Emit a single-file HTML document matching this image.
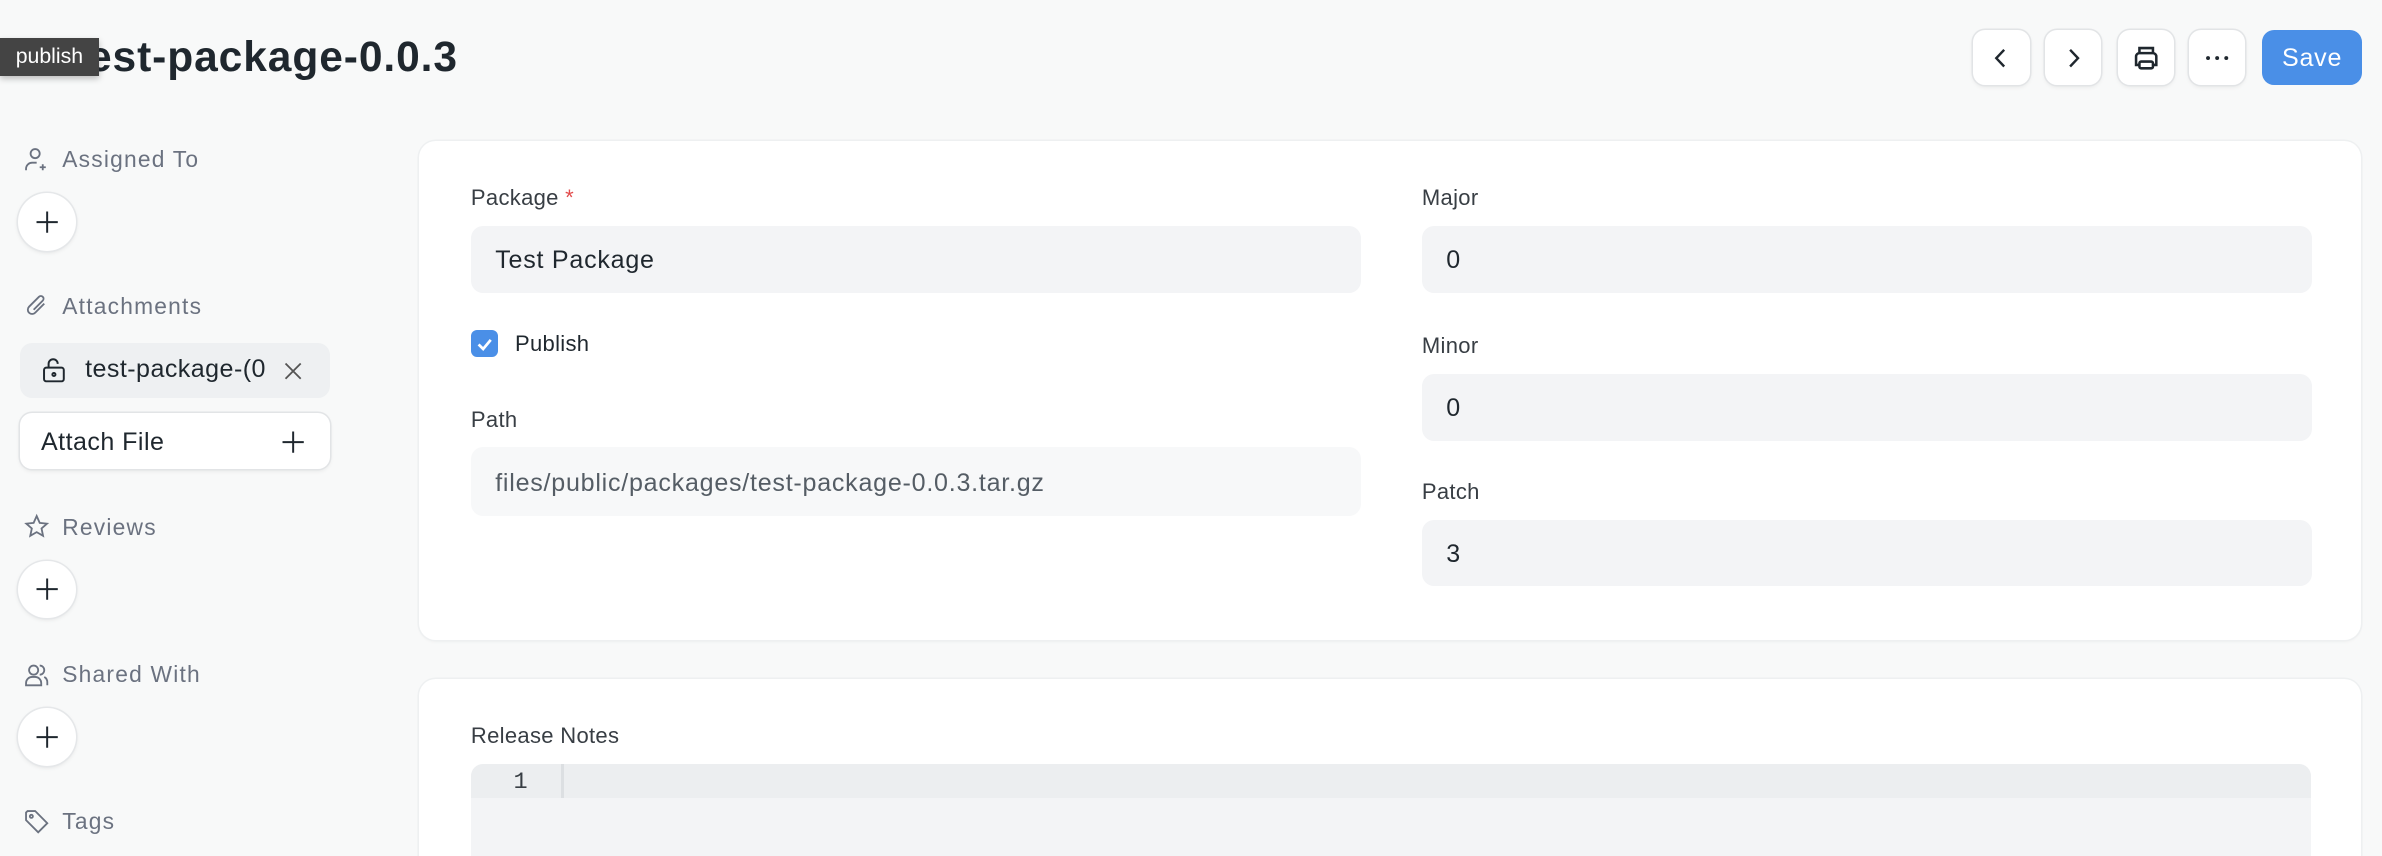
<!DOCTYPE html>
<html><head><meta charset="utf-8"><style>
html,body{margin:0;padding:0;width:2382px;height:856px;overflow:hidden;background:#f8f9f9}
#w{zoom:1.51913;position:relative;width:1568px;height:564px;font-family:"Liberation Sans",sans-serif;color:#1f272e}
.a{position:absolute}
.btn{position:absolute;top:20px;width:37px;height:36px;background:#fff;border-radius:8px;box-shadow:0 0 0 1px #e2e4e6,0 1px 3px rgba(0,0,0,.08);display:flex;align-items:center;justify-content:center}
.lbl{position:absolute;font-size:15px;color:#6b7280;letter-spacing:.8px;display:flex;align-items:center;gap:8px}
.circ{position:absolute;left:12px;width:38px;height:38px;border-radius:50%;background:#fff;box-shadow:0 0 0 1px #e5e7e9,0 1px 3px rgba(0,0,0,.1);display:flex;align-items:center;justify-content:center}
.card{position:absolute;left:276px;width:1278px;background:#fff;border-radius:11px;box-shadow:0 0 0 1px #eef0f1,0 1px 2px rgba(0,0,0,.04)}
.fl{position:absolute;font-size:14.5px;color:#383e44;letter-spacing:.2px}
.inp{position:absolute;height:44px;background:#f3f4f6;border-radius:8px;font-size:16.5px;line-height:46px;padding-left:16px;box-sizing:border-box;color:#1f272e;letter-spacing:.5px}
</style></head><body><div id="w">
<div class="a" style="left:48px;top:22px;font-size:28px;font-weight:bold;color:#1f272e;letter-spacing:.6px">test-package-0.0.3</div>
<div class="a" style="left:0;top:25px;width:65px;height:25px;background:#444;color:#fff;font-size:14px;line-height:25px;text-align:center;box-shadow:0 2px 4px rgba(0,0,0,.25)">publish</div>

<div class="btn" style="left:1299px"><svg width="16" height="16" viewBox="0 0 16 16"><path d="M10 2.5 4.8 8l5.2 5.5" fill="none" stroke="#1f272e" stroke-width="1.6"/></svg></div>
<div class="btn" style="left:1346px"><svg width="16" height="16" viewBox="0 0 16 16"><path d="M6 2.5 11.2 8 6 13.5" fill="none" stroke="#1f272e" stroke-width="1.6"/></svg></div>
<div class="btn" style="left:1394px"><svg width="20" height="20" viewBox="0 0 18 18" fill="none" stroke="#1f272e" stroke-width="1.5"><path d="M5 6V3h8v3M5 13H3V8a2 2 0 0 1 2-2h8a2 2 0 0 1 2 2v5h-2"/><rect x="5" y="11" width="8" height="4" rx="1"/></svg></div>
<div class="btn" style="left:1441px"><svg width="16" height="4"><circle cx="2" cy="2" r="1.3" fill="#1f272e"/><circle cx="8" cy="2" r="1.3" fill="#1f272e"/><circle cx="14" cy="2" r="1.3" fill="#1f272e"/></svg></div>
<div class="a" style="left:1489px;top:20px;width:66px;height:36px;background:#4a8fe7;border-radius:8px;color:#fff;font-size:16.5px;line-height:37px;text-align:center;letter-spacing:.5px">Save</div>

<div class="lbl" style="left:15px;top:96px"><svg width="18" height="18" viewBox="0 0 18 18" fill="none" stroke="#6b7280" stroke-width="1.2"><circle cx="8" cy="5" r="3"/><path d="M2 16v-1a4 4 0 0 1 4-4h3M13 12v4M11 14h4"/></svg>Assigned To</div>
<div class="circ" style="top:127px"><svg width="16" height="16"><path d="M8 1v14M1 8h14" stroke="#1f272e" stroke-width="1.3"/></svg></div>
<div class="lbl" style="left:15px;top:193px"><svg width="18" height="18" viewBox="0 0 18 18" fill="none" stroke="#6b7280" stroke-width="1.2"><path d="M14 7l-6 6a2.5 2.5 0 0 1-4-4l6.5-6.5a1.7 1.7 0 0 1 2.5 2.5L7 11"/></svg>Attachments</div>
<div class="a" style="left:13px;top:226px;width:204px;height:36px;background:#eef0f2;border-radius:8px"></div>
<svg class="a" style="left:27px;top:235px" width="18" height="18" viewBox="0 0 18 18" fill="none" stroke="#1f272e" stroke-width="1.3"><rect x="2" y="7" width="13" height="9" rx="1.5"/><path d="M5 7V4.5a3 3 0 0 1 6 0"/><circle cx="8.5" cy="11.5" r="1"/></svg>
<div class="a" style="left:56px;top:234px;font-size:16.5px;width:119px;overflow:hidden;white-space:nowrap;letter-spacing:.3px">test-package-(0.3.tar.gz</div>
<svg class="a" style="left:187px;top:238px" width="12" height="12"><path d="M1 1l10 10M11 1 1 11" stroke="#555" stroke-width="1.2"/></svg>
<div class="a" style="left:13px;top:272px;width:204px;height:37px;background:#fff;border-radius:8px;box-shadow:0 0 0 1px #e2e4e6,0 1px 3px rgba(0,0,0,.08)"></div>
<div class="a" style="left:27px;top:282px;font-size:16.5px;letter-spacing:.3px">Attach File</div>
<svg class="a" style="left:185px;top:283px" width="16" height="16"><path d="M8 1v14M1 8h14" stroke="#1f272e" stroke-width="1.3"/></svg>
<div class="lbl" style="left:15px;top:338px"><svg width="18" height="18" viewBox="0 0 18 18" fill="none" stroke="#6b7280" stroke-width="1.2"><path d="M9 2l2 4.5 4.8.5-3.6 3.2 1 4.8L9 12.6 4.8 15l1-4.8L2.2 7l4.8-.5z"/></svg>Reviews</div>
<div class="circ" style="top:369px"><svg width="16" height="16"><path d="M8 1v14M1 8h14" stroke="#1f272e" stroke-width="1.3"/></svg></div>
<div class="lbl" style="left:15px;top:435px"><svg width="18" height="18" viewBox="0 0 18 18" fill="none" stroke="#6b7280" stroke-width="1.2"><circle cx="7" cy="6" r="3"/><path d="M2 16v-1.5a4 4 0 0 1 4-4h2a4 4 0 0 1 4 4V16zM11 3a3 3 0 0 1 0 6M14 10.5a4 4 0 0 1 2 3.5v2"/></svg>Shared With</div>
<div class="circ" style="top:466px"><svg width="16" height="16"><path d="M8 1v14M1 8h14" stroke="#1f272e" stroke-width="1.3"/></svg></div>
<div class="lbl" style="left:15px;top:532px"><svg width="18" height="18" viewBox="0 0 18 18" fill="none" stroke="#6b7280" stroke-width="1.2"><path d="M2 3v5l8 8 6-6-8-8H3z"/><circle cx="5.5" cy="5.5" r="1"/></svg>Tags</div>

<div class="card" style="top:93px;height:328px"></div>
<div class="fl" style="left:310px;top:122px">Package <span style="color:#e24c4c">*</span></div>
<div class="inp" style="left:310px;top:149px;width:586px">Test Package</div>
<div class="a" style="left:310px;top:217px;width:18px;height:18px;background:#4a8fe7;border-radius:4px"><svg width="18" height="18"><path d="M5 9.5l3 3 5-6" fill="none" stroke="#fff" stroke-width="1.8"/></svg></div>
<div class="fl" style="left:339px;top:218px;color:#1f272e">Publish</div>
<div class="fl" style="left:310px;top:268px">Path</div>
<div class="inp" style="left:310px;top:294px;width:586px;height:46px;line-height:48px;background:#f7f8f9;color:#555d65">files/public/packages/test-package-0.0.3.tar.gz</div>
<div class="fl" style="left:936px;top:122px">Major</div>
<div class="inp" style="left:936px;top:149px;width:586px">0</div>
<div class="fl" style="left:936px;top:219px">Minor</div>
<div class="inp" style="left:936px;top:246px;width:586px">0</div>
<div class="fl" style="left:936px;top:315px">Patch</div>
<div class="inp" style="left:936px;top:342px;width:586px">3</div>

<div class="card" style="top:447px;height:140px"></div>
<div class="fl" style="left:310px;top:476px">Release Notes</div>
<div class="a" style="left:310px;top:503px;width:1211px;height:80px;background:#f3f4f6;border-radius:8px 8px 0 0;overflow:hidden">
<div class="a" style="left:0;top:0;width:1211px;height:22px;background:#eceef0"></div>
<div class="a" style="left:59px;top:0;width:2px;height:22px;background:#dcdfe2"></div>
<div class="a" style="left:28px;top:3px;font-size:15.5px;color:#383e44;font-family:'Liberation Mono',monospace">1</div>
</div>
</div></body></html>
